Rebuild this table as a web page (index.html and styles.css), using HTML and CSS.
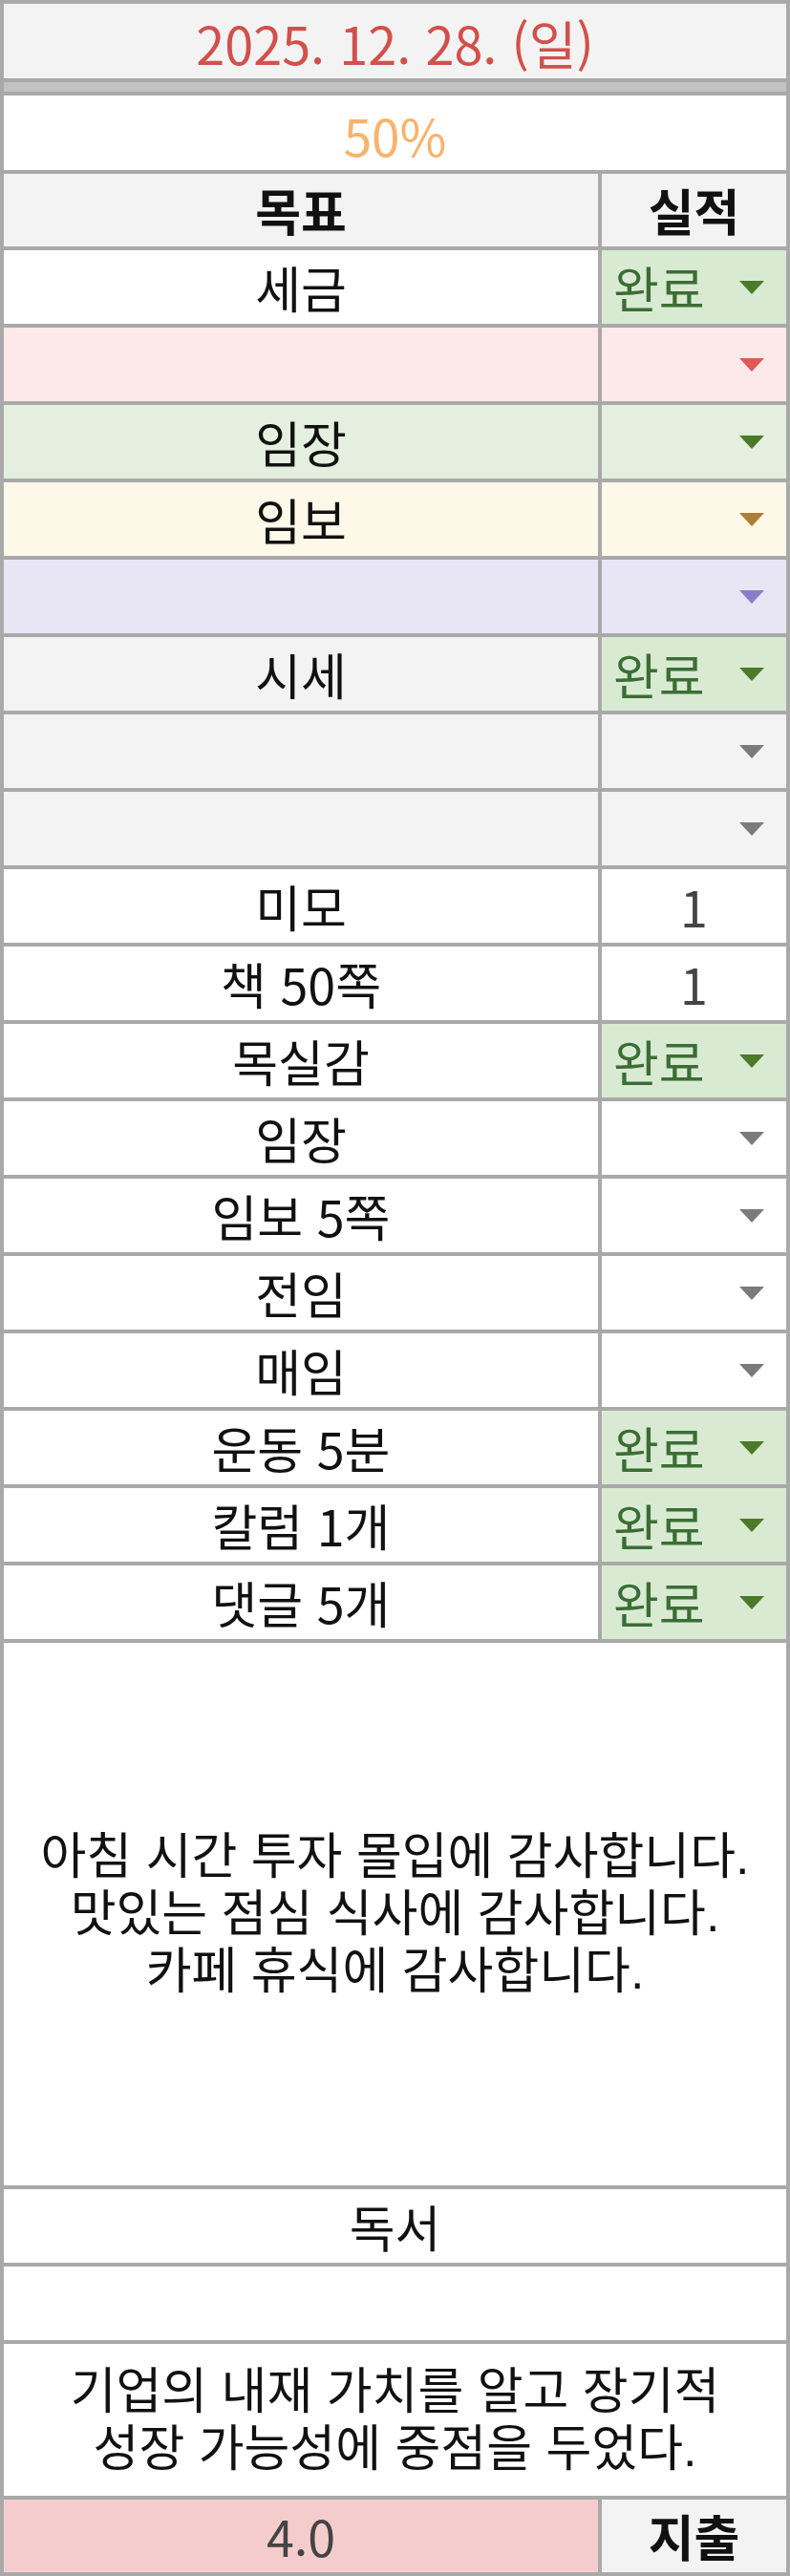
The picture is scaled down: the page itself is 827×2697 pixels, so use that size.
FILE: index.html
```html
<!DOCTYPE html>
<html lang="ko">
<head>
<meta charset="utf-8">
<title>2025. 12. 28.</title>
<link rel="stylesheet" href="styles.css">
</head>
<body>
<div class="sheet">
  <div class="cell span date">2025. 12. 28. (일)</div>
  <div class="cell span band"></div>
  <div class="cell span pct">50%</div>

  <div class="cell head">목표</div>
  <div class="cell head">실적</div>

  <div class="cell row">세금</div>
  <div class="cell dd done"><span>완료</span><i class="tri t-green"></i></div>

  <div class="cell row c-pink"></div>
  <div class="cell dd c-pink"><span></span><i class="tri t-red"></i></div>

  <div class="cell row c-green">임장</div>
  <div class="cell dd c-green"><span></span><i class="tri t-green"></i></div>

  <div class="cell row c-yellow">임보</div>
  <div class="cell dd c-yellow"><span></span><i class="tri t-orange"></i></div>

  <div class="cell row c-purple"></div>
  <div class="cell dd c-purple"><span></span><i class="tri t-purple"></i></div>

  <div class="cell row c-gray">시세</div>
  <div class="cell dd done"><span>완료</span><i class="tri t-green"></i></div>

  <div class="cell row c-gray"></div>
  <div class="cell dd c-gray"><span></span><i class="tri t-gray"></i></div>

  <div class="cell row c-gray"></div>
  <div class="cell dd c-gray"><span></span><i class="tri t-gray"></i></div>

  <div class="cell row">미모</div>
  <div class="cell num">1</div>

  <div class="cell row">책 50쪽</div>
  <div class="cell num">1</div>

  <div class="cell row">목실감</div>
  <div class="cell dd done"><span>완료</span><i class="tri t-green"></i></div>

  <div class="cell row">임장</div>
  <div class="cell dd"><span></span><i class="tri t-gray"></i></div>

  <div class="cell row">임보 5쪽</div>
  <div class="cell dd"><span></span><i class="tri t-gray"></i></div>

  <div class="cell row">전임</div>
  <div class="cell dd"><span></span><i class="tri t-gray"></i></div>

  <div class="cell row">매임</div>
  <div class="cell dd"><span></span><i class="tri t-gray"></i></div>

  <div class="cell row">운동 5분</div>
  <div class="cell dd done"><span>완료</span><i class="tri t-green"></i></div>

  <div class="cell row">칼럼 1개</div>
  <div class="cell dd done"><span>완료</span><i class="tri t-green"></i></div>

  <div class="cell row">댓글 5개</div>
  <div class="cell dd done"><span>완료</span><i class="tri t-green"></i></div>

  <div class="cell span note">
    <div class="line">아침 시간 투자 몰입에 감사합니다.</div>
    <div class="line">맛있는 점심 식사에 감사합니다.</div>
    <div class="line">카페 휴식에 감사합니다.</div>
  </div>

  <div class="cell span">독서</div>
  <div class="cell span"></div>
  <div class="cell span note">
    <div class="line">기업의 내재 가치를 알고 장기적</div>
    <div class="line">성장 가능성에 중점을 두었다.</div>
  </div>

  <div class="cell spend">4.0</div>
  <div class="cell head">지출</div>
</div>
</body>
</html>
```

FILE: styles.css
```css
html, body {
  margin: 0;
  padding: 0;
  background: #ffffff;
}

.sheet {
  width: 827px;
  height: 2697px;
  box-sizing: border-box;
  display: grid;
  grid-template-columns: 622px 193px;
  grid-template-rows:
    78px 10px 78px 76px
    repeat(18, 77px)
    568px 77px 77px 159px 76px;
  gap: 4px;
  padding: 4px;
  background: #a9a9a9;
  font-family: "Noto Sans CJK KR", "Noto Sans", sans-serif;
  font-size: 52px;
  color: #111;
}

.cell {
  background: #ffffff;
  display: flex;
  align-items: center;
  justify-content: center;
  line-height: 60px;
  white-space: nowrap;
}

.span {
  grid-column: 1 / 3;
}

.date {
  background: #f3f3f3;
  color: #d2504b;
  font-size: 54px;
  padding-top: 4px;
}

.band {
  background: #c2c2c2;
}

.pct {
  color: #f7b36c;
  font-size: 53px;
  padding-top: 4px;
}

.head {
  background: #f3f3f3;
  font-weight: 700;
}

.dd {
  justify-content: space-between;
  padding: 0 23px 0 12px;
}

.done {
  background: #d9ead3;
  color: #3b6e34;
}

.num {
  color: #444;
}

.tri {
  display: block;
  width: 0;
  height: 0;
  border-left: 13px solid transparent;
  border-right: 13px solid transparent;
  border-top: 14px solid #7a7a7a;
}

.t-green { border-top-color: #4b7a28; }
.t-red { border-top-color: #de5a52; }
.t-orange { border-top-color: #b07d34; }
.t-purple { border-top-color: #8c7cc8; }
.t-gray { border-top-color: #7b7b7b; }

.c-pink { background: #fde9e9; }
.c-green { background: #e5efe0; }
.c-yellow { background: #fef8e8; }
.c-purple { background: #e8e5f5; }
.c-gray { background: #f3f3f3; }

.note {
  flex-direction: column;
}

.line {
  height: 60px;
  line-height: 60px;
  text-align: center;
  font-family: "Liberation Sans", "Noto Sans CJK KR", sans-serif;
}

.spend {
  background: #f4cccc;
  color: #444;
}
```
